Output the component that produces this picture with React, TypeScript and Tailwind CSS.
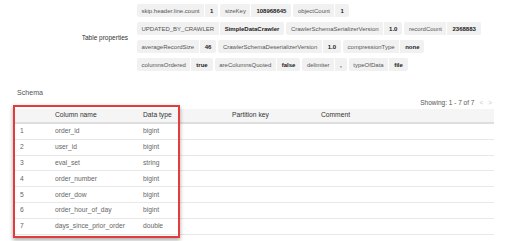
const propRows: [string, string][][] = [
  [
    ['skip.header.line.count', '1'],
    ['sizeKey', '108968645'],
    ['objectCount', '1'],
  ],
  [
    ['UPDATED_BY_CRAWLER', 'SimpleDataCrawler'],
    ['CrawlerSchemaSerializerVersion', '1.0'],
    ['recordCount', '2368883'],
  ],
  [
    ['averageRecordSize', '46'],
    ['CrawlerSchemaDeserializerVersion', '1.0'],
    ['compressionType', 'none'],
  ],
  [
    ['columnsOrdered', 'true'],
    ['areColumnsQuoted', 'false'],
    ['delimiter', ','],
    ['typeOfData', 'file'],
  ],
];

const columns = [
  ['1', 'order_id', 'bigint'],
  ['2', 'user_id', 'bigint'],
  ['3', 'eval_set', 'string'],
  ['4', 'order_number', 'bigint'],
  ['5', 'order_dow', 'bigint'],
  ['6', 'order_hour_of_day', 'bigint'],
  ['7', 'days_since_prior_order', 'double'],
];

function Chip({ name, value }: { name: string; value: string }) {
  return (
    <div className="flex h-[13px] items-center rounded-[2px] bg-[#f1f1f1] text-[6px] leading-none">
      <span className="px-[4.5px] text-[#555]">{name}</span>
      <span className="flex h-full items-center border-l border-white px-[5px] font-bold text-[#222]">{value}</span>
    </div>
  );
}

export default function App() {
  return (
    <div className="relative h-[241px] w-[512px] overflow-hidden bg-white font-['Liberation_Sans',Arial,sans-serif]">
      <div className="flex items-center pt-[4px]">
        <div className="w-[137px] pr-[9px] text-right text-[6.5px] text-[#333]">Table properties</div>
        <div className="flex flex-col gap-[5px]">
          {propRows.map((row, i) => (
            <div key={i} className="flex gap-[2px]">
              {row.map(([k, v]) => (
                <Chip key={k} name={k} value={v} />
              ))}
            </div>
          ))}
        </div>
      </div>

      <div className="mt-[17px] pl-[17px] text-[7.1px] leading-[10px] text-[#555]">Schema</div>

      <div className="flex items-center justify-end gap-[5px] pr-[20px] text-[6.5px] leading-[9px]">
        <span className="text-[#555]">Showing: 1 - 7 of 7</span>
        <span className="text-[#c8c8c8]">&lt;</span>
        <span className="text-[#c8c8c8]">&gt;</span>
      </div>

      <div className="relative ml-[14px] mt-[2px] w-[480px] text-[6.7px]">
        <div className="grid h-[15px] grid-cols-[35px_88px_89px_89px_1fr] items-center border-b-2 border-[#dedede] bg-[#f5f5f5] text-[#333]">
          <span />
          <span className="pl-[6px]">Column name</span>
          <span className="pl-[6px]">Data type</span>
          <span className="pl-[6px]">Partition key</span>
          <span className="pl-[6px]">Comment</span>
        </div>
        {columns.map(([n, name, type]) => (
          <div
            key={n}
            className="grid h-[15.8px] grid-cols-[35px_88px_89px_89px_1fr] items-center border-b border-[#e8e8e8] text-[#666]"
          >
            <span className="pl-[6px]">{n}</span>
            <span className="pl-[6px]">{name}</span>
            <span className="pl-[6px]">{type}</span>
            <span />
            <span />
          </div>
        ))}
        <div className="absolute left-[-1px] top-[-4px] h-[133px] w-[167px] border-2 border-[#e23c3c] shadow-[0_2px_4px_rgba(0,0,0,0.35)]" />
      </div>
    </div>
  );
}
